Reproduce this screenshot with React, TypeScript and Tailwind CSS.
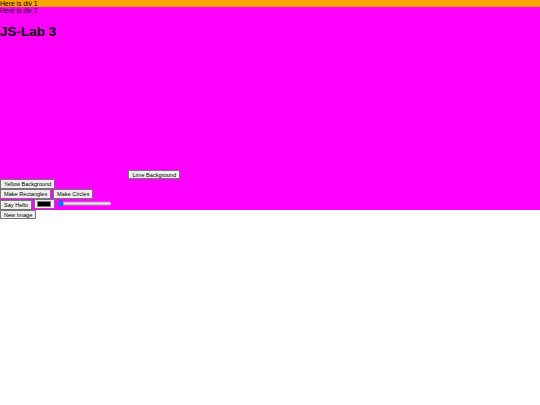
import React from 'react';

// page is laid out at 1280px wide and shrunk to the 540px window
const Btn: React.FC<{ children: React.ReactNode }> = ({ children }) => (
  <button className="inline-block align-baseline bg-[#efefef] border border-[#767676] rounded-[2px] px-[7px] py-[2px] text-[13.333px] leading-[normal] text-black">
    {children}
  </button>
);

const ColorPick: React.FC = () => (
  <span className="inline-block align-[-5.8px] w-[50px] h-[25px] border border-[#767676] bg-[#efefef] rounded-[2px] px-[6px] py-[3px]">
    <span className="block h-full bg-black border border-[#777777]" />
  </span>
);

const App: React.FC = () => {
  return (
    <div className="[zoom:0.421875] font-['Liberation_Sans',Arial,sans-serif] text-[16px] leading-[normal] text-black">
      <div className="bg-[#ffa500]">Here is div 1</div>
      <div className="bg-[#ff00ff]">
        Here is div 2
        <h1 className="text-[32px] font-bold mt-[24px] mb-[21.44px]">JS-Lab 3</h1>
        <span className="inline-block w-[300px] h-[152px]" />
        <br />
        <span className="inline-block w-[300px] h-[150px]" /> <Btn>Lime Background</Btn>
        <br />
        <Btn>Yellow Background</Btn>
        <br />
        <Btn>Make Rectangles</Btn> <Btn>Make Circles</Btn>
        <br />
        <Btn>Say Hello</Btn> <ColorPick />{' '}
        <input type="range" min={0} max={100} defaultValue={0} className="m-0 ml-[2px] w-[129px] h-[16px] align-baseline" />
      </div>
      <Btn>New Image</Btn>
    </div>
  );
};

export default App;
